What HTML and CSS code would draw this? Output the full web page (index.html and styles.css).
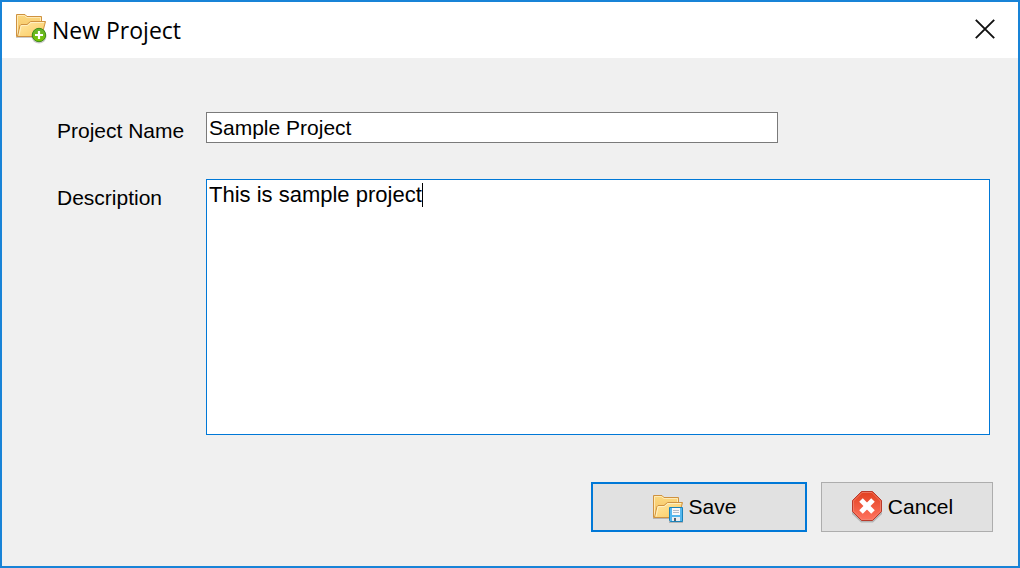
FILE: index.html
```html
<!DOCTYPE html>
<html lang="en">
<head>
<meta charset="utf-8">
<meta name="viewport" content="width=device-width, initial-scale=1">
<title>New Project</title>
<link rel="stylesheet" href="styles.css">
</head>
<body>
<svg class="defs" aria-hidden="true">
  <defs>
    <linearGradient id="paper" x1="0" y1="0" x2="1" y2="1">
      <stop offset="0" stop-color="#ffe9a8"/><stop offset="1" stop-color="#fbc95c"/>
    </linearGradient>
    <linearGradient id="paperback" x1="0" y1="0" x2="0" y2="1">
      <stop offset="0" stop-color="#fcd980"/><stop offset="1" stop-color="#f3c062"/>
    </linearGradient>
    <linearGradient id="green" x1="0" y1="0" x2="0" y2="1">
      <stop offset="0" stop-color="#60b030"/><stop offset="1" stop-color="#7cc800"/>
    </linearGradient>
    <linearGradient id="red" x1="0" y1="0" x2="0" y2="1">
      <stop offset="0" stop-color="#e2401f"/><stop offset="1" stop-color="#ff7460"/>
    </linearGradient>
    <g id="folder">
      <path d="M1 23.500H24" stroke="#000" stroke-opacity=".2" stroke-width="1"/>
      <path d="M1.500 22.500V.5H10L12 2.500H26.500V9L23 22.500Z" fill="url(#paperback)" stroke="#cf9240"/>
      <path d="M2.500 21V1.500H9.500L11.500 3.500H25.500V7" fill="none" stroke="#ffeab5"/>
      <path d="M2.500 22.500L5 11.500L6 10.500H12L15.500 7.500H30.500L26.500 22.500Z" fill="url(#paper)" stroke="#cf9240"/>
      <path d="M4 21.500L6 12L7 11.500H12.500L16 8.500H29" fill="none" stroke="#fff0c3"/>
    </g>
  </defs>
</svg>
<main class="dialog">
  <header class="titlebar">
    <svg class="icon" viewBox="0 0 32 32" aria-hidden="true">
      <use href="#folder" y="1"/>
      <ellipse cx="24" cy="23.500" rx="7.500" ry="7" fill="#000" fill-opacity=".2"/>
      <circle cx="24" cy="22" r="6.700" fill="url(#green)" stroke="#3c8b18"/>
      <path d="M24 18V26M20 22H28" stroke="#fff" stroke-width="2.200"/>
    </svg>
    <h1 class="title">New Project</h1>
    <button class="close" type="button" aria-label="Close">
      <svg viewBox="0 0 20 20" aria-hidden="true"><path d="M.8.8L19.200 19.200M19.200.8L.8 19.200" stroke="#111" stroke-width="1.900"/></svg>
    </button>
  </header>
  <form class="form">
    <div class="fields">
      <label class="label" for="name">Project Name</label>
      <input class="field name" id="name" type="text" value="Sample Project">
      <label class="label" for="description">Description</label>
      <div class="editor">
        <textarea class="field description" id="description" spellcheck="false">This is sample project</textarea>
        <span class="caret"></span>
      </div>
    </div>
    <div class="actions">
      <button class="button save" type="button">
        <svg class="icon" viewBox="0 0 32 32" aria-hidden="true">
          <use href="#folder" y="4"/>
          <path d="M17 31H31" stroke="#000" stroke-opacity=".2" stroke-width="2"/>
          <path d="M17.500 16.500H30.500V30.500H18.500L17.500 29.500Z" fill="#54b7ee" stroke="#1b83bb"/>
          <path d="M20 17H28V24H20Z" fill="#f7f8fa"/>
          <path d="M21 19.500H27M21 21.500H27" stroke="#b4bac5"/>
          <path d="M20 26H28V30H20Z" fill="#e9edf1"/>
          <path d="M22 27H24V30H22Z" fill="#54616f"/>
        </svg>
        <span>Save</span>
      </button>
      <button class="button cancel" type="button">
        <svg class="icon" viewBox="0 0 32 32" aria-hidden="true">
          <path d="M10 2H22L31 11V23L22 31.500H10L1 23V11Z" fill="#000" fill-opacity=".2"/>
          <path d="M10.500 .5H21.500L30.500 9.500V20.500L21.500 29.500H10.500L1.500 20.500V9.500Z" fill="url(#red)" stroke="#b93a2b"/>
          <path d="M11 1.500H21L29.500 10V20L21 28.500H11L2.500 20V10Z" fill="none" stroke="#ef8a76" stroke-opacity=".7"/>
          <path d="M10 9L22 21M22 9L10 21" stroke="#fff" stroke-width="5"/>
        </svg>
        <span>Cancel</span>
      </button>
    </div>
  </form>
</main>
</body>
</html>
```

FILE: styles.css
```css
* {
  box-sizing: border-box;
}

body {
  margin: 0;
  background: #f0f0f0;
  color: #000;
  font: 21px/24px "Liberation Sans", Arial, sans-serif;
}

.defs {
  position: absolute;
  width: 0;
  height: 0;
}

.dialog {
  display: flex;
  flex-direction: column;
  min-height: 100vh;
  border: 2px solid #1883d7;
}

.titlebar {
  display: flex;
  align-items: center;
  gap: 5px;
  height: 56px;
  padding: 0 21px 2px 13px;
  background: #fff;
}

.icon {
  flex: none;
  width: 32px;
  height: 32px;
}

.title {
  flex: 1;
  margin: 2px 0 0;
  font: 400 23px/32px "Open Sans", "Noto Sans", sans-serif;
}

.close {
  display: flex;
  padding: 2px;
  border: 0;
  background: none;
}

.close svg {
  width: 20px;
  height: 20px;
}

.form {
  display: flex;
  flex: 1;
  flex-direction: column;
  padding: 54px 25px 34px 55px;
}

.fields {
  display: grid;
  flex: 1;
  grid-template-columns: 149px 1fr;
  grid-template-rows: auto 1fr;
  row-gap: 36px;
  padding-right: 3px;
}

.label {
  padding-top: 7px;
}

.field {
  display: block;
  margin: 0;
  padding: 2px;
  border: 1px solid #7a7a7a;
  border-radius: 0;
  outline: 0;
  background: #fff;
  color: inherit;
  font: inherit;
}

.name {
  width: 73%;
  height: 31px;
}

.editor {
  position: relative;
  min-height: 256px;
}

.description {
  width: 100%;
  height: 100%;
  padding-top: 3px;
  border-color: #0078d7;
  font-size: 22px;
  resize: none;
}

.caret {
  position: absolute;
  top: 4px;
  left: 216px;
  width: 1px;
  height: 24px;
  background: #000;
}

.actions {
  display: flex;
  justify-content: flex-end;
  gap: 14px;
  margin-top: 47px;
}

.button {
  display: flex;
  align-items: center;
  justify-content: center;
  gap: 5px;
  width: 172px;
  height: 50px;
  padding: 0 10px 0 0;
  border: 1px solid #adadad;
  background: #e1e1e1;
  color: inherit;
  font: inherit;
}

.save {
  width: 216px;
  border: 2px solid #0078d7;
}
```
